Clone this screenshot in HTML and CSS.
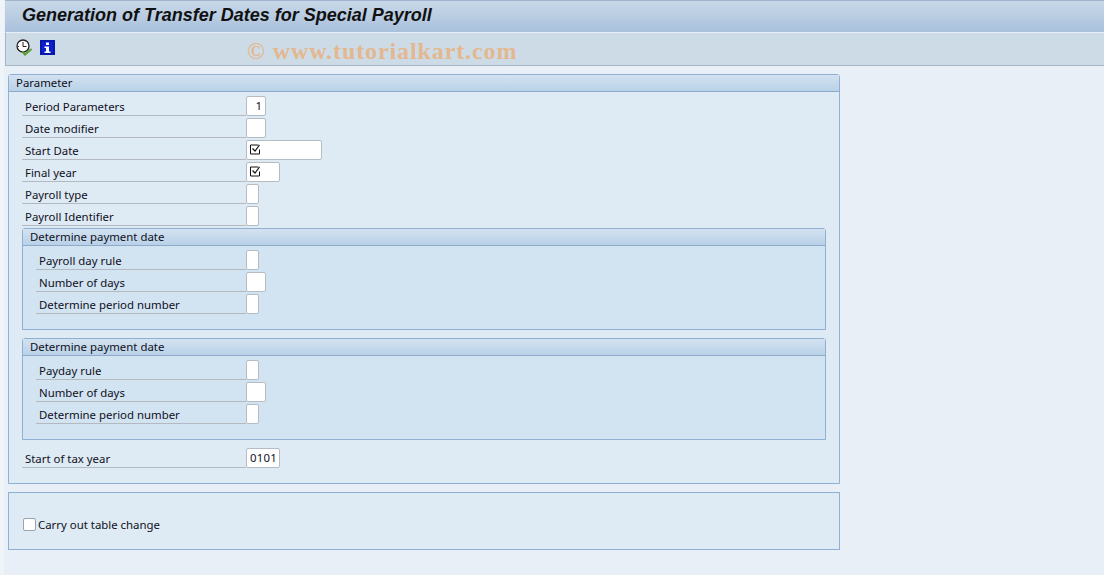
FILE: index.html
```html
<!DOCTYPE html>
<html lang="en">
<head>
<meta charset="utf-8">
<title>Generation of Transfer Dates for Special Payroll</title>
<link rel="stylesheet" href="styles.css">
</head>
<body>
<div class="screen">
  <header class="titlebar"><h1>Generation of Transfer Dates for Special Payroll</h1></header>
  <div class="toolbar">
    <svg class="icon" width="17" height="17" viewBox="0 0 17 17">
      <circle cx="7" cy="7" r="6" fill="#fff" stroke="#222" stroke-width="1.300"/>
      <path d="M7 3v4.500h3.500M2 7.500h1" fill="none" stroke="#222" stroke-width="1"/>
      <path d="M6.500 12.500l2.500 3 6.500-5.500" fill="none" stroke="#5aa033" stroke-width="2.200"/>
    </svg>
    <svg class="icon icon-info" width="15" height="15" viewBox="0 0 15 15">
      <rect width="15" height="15" fill="#0a1fd0"/>
      <rect x="1" y="1" width="13" height="13" fill="none" stroke="#06128a"/>
      <path d="M6 2.500h3v2.500H6zM4.500 6.500H9v5h1.500v1.500h-6V11.500H6V8H4.500z" fill="#fff"/>
    </svg>
    <span class="watermark">© www.tutorialkart.com</span>
  </div>
  <main class="content">
    <section class="group">
      <div class="group-title">Parameter</div>
      <div class="group-body">
        <div class="row"><label>Period Parameters</label><span class="field w20 right">1</span></div>
        <div class="row"><label>Date modifier</label><span class="field w20"></span></div>
        <div class="row"><label>Start Date</label><span class="field w76"><svg class="req" width="11" height="11" viewBox="0 0 11 11"><path d="M9.500 5.500v4.500H.5V1h8" fill="none" stroke="#111"/><path d="M2.500 4.500l2.500 2.500 4.500-6" fill="none" stroke="#111" stroke-width="1.200"/></svg></span></div>
        <div class="row"><label>Final year</label><span class="field w34"><svg class="req" width="11" height="11" viewBox="0 0 11 11"><path d="M9.500 5.500v4.500H.5V1h8" fill="none" stroke="#111"/><path d="M2.500 4.500l2.500 2.500 4.500-6" fill="none" stroke="#111" stroke-width="1.200"/></svg></span></div>
        <div class="row"><label>Payroll type</label><span class="field w13"></span></div>
        <div class="row"><label>Payroll Identifier</label><span class="field w13"></span></div>
        <section class="subgroup">
          <div class="group-title">Determine payment date</div>
          <div class="subgroup-body">
            <div class="row inner"><label>Payroll day rule</label><span class="field w13"></span></div>
            <div class="row inner"><label>Number of days</label><span class="field w20"></span></div>
            <div class="row inner"><label>Determine period number</label><span class="field w13"></span></div>
          </div>
        </section>
        <section class="subgroup">
          <div class="group-title">Determine payment date</div>
          <div class="subgroup-body">
            <div class="row inner"><label>Payday rule</label><span class="field w13"></span></div>
            <div class="row inner"><label>Number of days</label><span class="field w20"></span></div>
            <div class="row inner"><label>Determine period number</label><span class="field w13"></span></div>
          </div>
        </section>
        <div class="row last"><label>Start of tax year</label><span class="field w34 digits">0101</span></div>
      </div>
    </section>
    <section class="plain">
      <span class="checkbox"></span><span class="check-label">Carry out table change</span>
    </section>
  </main>
</div>
</body>
</html>
```
FILE: styles.css
```css
* { box-sizing: border-box; }
html, body { margin: 0; height: 100%; }
body { background: #eff4f9; font-family: "Noto Sans", sans-serif; font-size: 11.400px; color: #10101c; overflow: hidden; }
.screen { width: 1100px; height: 575px; margin-left: 4px; display: flex; flex-direction: column; background: #e8eff7; }
.titlebar { height: 32px; margin-left: 1px; flex: none; border-top: 1px solid #9fb4cc; background: linear-gradient(#c9d8e8, #a9c1dc); display: flex; align-items: center; padding: 0 0 3px 17px; }
.titlebar h1 { margin: 0; font: italic bold 18px "Liberation Sans", sans-serif; color: #111; }
.toolbar { height: 34px; margin-left: 1px; flex: none; border-top: 1px solid #e8eff7; border-bottom: 1px solid #a5b5c5; border-left: 1px solid #a5b5c5; background: #cddbe7; display: flex; align-items: center; padding: 0 0 3px 10px; gap: 7px; position: relative; }
.icon { display: block; }
.watermark { font: bold 24px "Liberation Serif", serif; letter-spacing: .9px; color: #e3b88f; position: absolute; left: 241px; top: 5px; }
.content { padding: 8px 0 0 4px; width: 836px; }
.group { border: 1px solid #8fb0d2; border-radius: 3px 3px 0 0; background: #deeaf4; height: 410px; }
.group-title { height: 17px; background: linear-gradient(#d3e2f0, #b9d1e8); border-bottom: 1px solid #8fabc9; padding-left: 7px; line-height: 15px; }
.group-body { padding: 4px 13px 0; }
.row { height: 22px; display: flex; align-items: flex-start; }
.row label { width: 224px; height: 20px; border-bottom: 1px solid #b3b9bf; padding: 2px 0 0 3px; line-height: 17px; flex: none; }
.field { height: 20px; background: #fff; border: 1px solid #b4bcc4; border-radius: 2px; display: block; line-height: 18px; padding: 0 3px; }
.w13 { width: 13px; }
.w20 { width: 20px; }
.w34 { width: 34px; }
.w76 { width: 76px; }
.right { text-align: right; }
.req { display: block; margin: 3px 0 0; }
.digits { letter-spacing: .2px; }
.subgroup { border: 1px solid #8fb0d2; border-radius: 3px 3px 0 0; background: #d2e3f2; height: 102px; margin-bottom: 8px; }
.subgroup + .subgroup { margin-top: 8px; }
.subgroup-body { padding: 4px 13px 0; }
.inner label { width: 210px; }
.last { margin-top: 8px; }
.plain { margin-top: 8px; height: 58px; border: 1px solid #8fb0d2; background: #deeaf4; display: flex; align-items: center; padding: 6px 0 0 14px; }
.checkbox { width: 13px; height: 13px; background: #fff; border: 1px solid #9aa4ae; border-radius: 2px; margin-right: 2px; }
```
